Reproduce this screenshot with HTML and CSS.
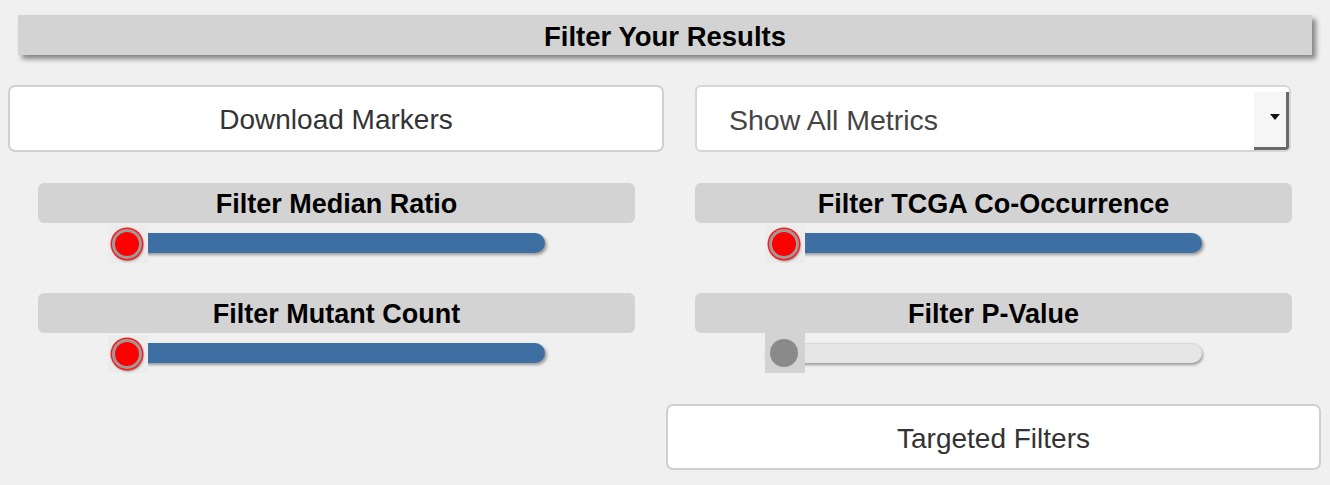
FILE: index.html
```html
<!DOCTYPE html>
<html>
<head>
<meta charset="utf-8">
<link rel="stylesheet" href="styles.css">
</head>
<body>
<div class="page">
  <div class="title">Filter Your Results</div>
  <div class="grid">
    <div class="cell row-top">
      <button class="btn download">Download Markers</button>
    </div>
    <div class="cell row-top">
      <div class="select">
        <span class="select-text">Show All Metrics</span>
        <span class="select-arrow"><span class="caret"></span></span>
      </div>
    </div>

    <div class="cell slider-block first">
      <div class="label">Filter Median Ratio</div>
      <div class="slider">
        <div class="track blue"></div>
        <div class="handle-box"><div class="handle red"></div></div>
      </div>
    </div>
    <div class="cell slider-block first">
      <div class="label">Filter TCGA Co-Occurrence</div>
      <div class="slider">
        <div class="track blue"></div>
        <div class="handle-box"><div class="handle red"></div></div>
      </div>
    </div>

    <div class="cell slider-block">
      <div class="label">Filter Mutant Count</div>
      <div class="slider">
        <div class="track blue"></div>
        <div class="handle-box"><div class="handle red"></div></div>
      </div>
    </div>
    <div class="cell slider-block">
      <div class="label">Filter P-Value</div>
      <div class="slider">
        <div class="track grey"></div>
        <div class="handle-box dark"><div class="handle grey"></div></div>
      </div>
    </div>

    <div class="cell"></div>
    <div class="cell row-bottom">
      <button class="btn targeted">Targeted Filters</button>
    </div>
  </div>
</div>
</body>
</html>
```

FILE: styles.css
```css
html, body {
  margin: 0;
  padding: 0;
  background: #f0f0f0;
  font-family: "Liberation Sans", Arial, Helvetica, sans-serif;
}

.page {
  width: 1330px;
  height: 485px;
  padding-top: 15px;
  box-sizing: border-box;
  overflow: hidden;
}

.title {
  margin-left: 18px;
  width: 1294px;
  height: 40px;
  line-height: 43px;
  background: #d3d3d3;
  text-align: center;
  font-weight: bold;
  font-size: 27.5px;
  color: #000;
  box-shadow: 4px 4px 5px #858585;
}

.grid {
  display: grid;
  grid-template-columns: 657px 657px;
  margin-left: 8px;
}

.row-top {
  margin-top: 30px;
}

.btn {
  display: block;
  background: #fff;
  border: 2px solid #cfcfcf;
  border-radius: 7px;
  font-family: "Liberation Sans", Arial, Helvetica, sans-serif;
  font-size: 28px;
  color: #333;
  box-sizing: border-box;
  padding: 0;
  padding-top: 3px;
  cursor: pointer;
}

.download {
  width: 656px;
  height: 67px;
}

.select {
  margin-left: 30px;
  width: 596px;
  height: 67px;
  box-sizing: border-box;
  background: #fff;
  border: 2px solid #d6d6d6;
  border-radius: 6px;
  display: flex;
  align-items: stretch;
  overflow: hidden;
}

.select-text {
  flex: 1;
  display: flex;
  align-items: center;
  padding-left: 32px;
  padding-top: 3px;
  font-size: 28.5px;
  color: #444;
}

.select-arrow {
  width: 26px;
  margin-top: 5px;
  background: #f6f6f6;
  border-right: 3px solid #6a6a6a;
  border-bottom: 3px solid #6a6a6a;
  border-bottom-right-radius: 3px;
  display: flex;
  align-items: center;
  justify-content: flex-end;
  padding-right: 6px;
}

.caret {
  width: 0;
  height: 0;
  border-left: 5px solid transparent;
  border-right: 5px solid transparent;
  border-top: 6px solid #111;
  margin-top: -6px;
}

.slider-block {
  padding: 0 30px;
  margin-top: 40px;
}

.slider-block.first {
  margin-top: 31px;
}

.label {
  height: 40px;
  line-height: 43px;
  background: #d3d3d3;
  border-radius: 6px;
  text-align: center;
  font-weight: bold;
  font-size: 27px;
  color: #000;
}

.slider {
  position: relative;
  height: 20px;
  margin-top: 10px;
}

.track {
  margin-left: 70px;
  width: 437px;
  height: 20px;
  border-radius: 10px;
  box-shadow: 2px 2px 3px #9a9a9a;
}

.track.blue {
  background: #3d6fa3;
}

.track.grey {
  background: #e6e6e6;
  box-shadow: 1px 2px 3px #9a9a9a, inset 0 1px 1px #d8d8d8;
}

.handle-box {
  position: absolute;
  left: 70px;
  top: -8px;
  width: 40px;
  height: 38px;
  background: #ececec;
  display: flex;
  align-items: center;
  justify-content: center;
}

.handle-box.dark {
  background: #d2d2d2;
  top: -10px;
  height: 40px;
}

.handle {
  width: 30px;
  height: 30px;
  border-radius: 50%;
  box-sizing: border-box;
  margin-left: -2px;
  margin-top: 0;
}

.handle.red {
  background: #ff0000;
  border: 3px solid #9b9b9b;
  box-shadow: 0 0 0 1.5px #ff1a1a, 1px 2px 3px #777;
}

.handle.grey {
  background: #8a8a8a;
  width: 28px;
  height: 28px;
}

.row-bottom {
  margin-top: 41px;
  padding-left: 1px;
}

.targeted {
  width: 655px;
  height: 66px;
}
```
